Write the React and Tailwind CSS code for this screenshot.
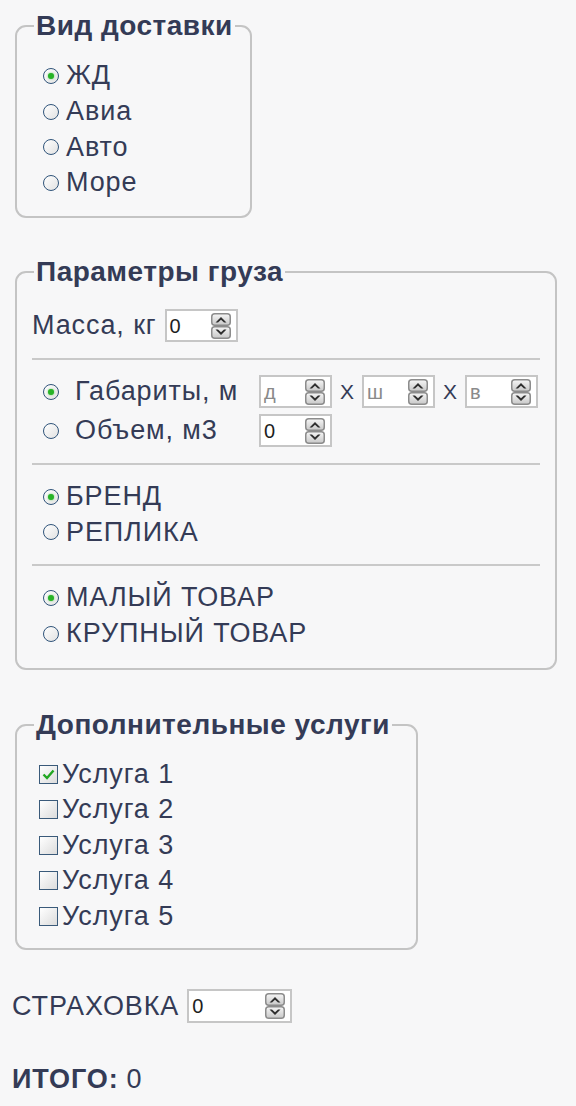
import { useState } from 'react';

// Calculator form: delivery type, cargo params, extra services, insurance, total

function Spinner() {
  return (
    <svg width="20" height="26" viewBox="0 0 20 26" className="shrink-0">
      <defs>
        <linearGradient id="spin-g" x1="0" y1="0" x2="0" y2="1">
          <stop offset="0" stopColor="#f6f6f6" />
          <stop offset="1" stopColor="#c8c8c8" />
        </linearGradient>
      </defs>
      <rect x="0.75" y="0.75" width="18.5" height="11.5" rx="3" fill="url(#spin-g)" stroke="#8c8c8c" strokeWidth="1.5" />
      <rect x="0.75" y="13.75" width="18.5" height="11.5" rx="3" fill="url(#spin-g)" stroke="#8c8c8c" strokeWidth="1.5" />
      <path d="M4.5 9.5 L10 4 L15.5 9.5 L13 9.5 L10 6.8 L7 9.5Z" fill="#2e2e2e" />
      <path d="M4.5 16.5 L10 22 L15.5 16.5 L13 16.5 L10 19.2 L7 16.5Z" fill="#2e2e2e" />
    </svg>
  );
}

function NumBox({ value, placeholder, wide }) {
  return (
    <div
      className={
        (wide ? 'w-[105px] h-[34px]' : 'w-[73px] h-[33px]') +
        ' flex items-center justify-between border-2 border-[#c6c6c6] bg-white pl-[3px] pr-[5px] shrink-0 tracking-normal'
      }
    >
      {value !== undefined ? (
        <span className="text-[20px] leading-none text-[#1e1e1e]">{value}</span>
      ) : (
        <span className="text-[20px] leading-none text-[#8a8a8a]">{placeholder}</span>
      )}
      <Spinner />
    </div>
  );
}

function Radio({ checked, onClick }) {
  return (
    <span
      onClick={onClick}
      className="ml-[11px] w-[16px] h-[16px] shrink-0 rounded-full border-[1.5px] border-[#30547a] bg-linear-to-br from-white to-[#e2e2e2] flex items-center justify-center cursor-pointer"
    >
      {checked && <span className="w-[6px] h-[6px] rounded-full bg-[#27b327] shadow-[0_0_2px_#6c6]" />}
    </span>
  );
}

function Check({ checked, onClick }) {
  return (
    <span
      onClick={onClick}
      className="ml-[7px] w-[19px] h-[19px] shrink-0 border-[1.5px] border-[#3a5a7a] bg-linear-to-br from-white to-[#dcdcdc] flex items-center justify-center cursor-pointer"
    >
      {checked && (
        <svg width="13" height="11" viewBox="0 0 13 11">
          <path d="M1.5 5.5 L5 9 L11.5 1.5" fill="none" stroke="#22a722" strokeWidth="2.4" />
        </svg>
      )}
    </span>
  );
}

function Divider() {
  return <div className="my-[14px] border-t-2 border-[#c9c9c9]" />;
}

function RadioRow({ label, checked, onClick }) {
  return (
    <div className="h-[35.7px] flex items-center gap-[7px]">
      <Radio checked={checked} onClick={onClick} />
      <span className="leading-none whitespace-nowrap">{label}</span>
    </div>
  );
}

export default function App() {
  const [delivery, setDelivery] = useState('ЖД');
  const [sizeMode, setSizeMode] = useState('dims');
  const [brand, setBrand]       = useState('БРЕНД');
  const [size, setSize]         = useState('МАЛЫЙ ТОВАР');
  const [services, setServices] = useState([true, false, false, false, false]);

  const legend = 'ml-[2px] px-[2px] text-[28px] font-bold leading-[30px] tracking-[0.5px] whitespace-nowrap';
  const fieldset = 'ml-[3px] rounded-[11px] border-2 border-[#c4c4c4] px-[15px]';

  return (
    <div className="min-h-[1106px] bg-[#f7f7f8] pl-[12px] pt-[11px] font-['Liberation_Sans',Arial,sans-serif] text-[27px] tracking-[0.9px] text-[#343b56]">
      {/* Вид доставки */}
      <fieldset className={fieldset + ' w-[237px] pb-[15px]'}>
        <legend className={legend}>Вид доставки</legend>
        <div className="pt-[17px]">
          {['ЖД', 'Авиа', 'Авто', 'Море'].map((d) => (
            <RadioRow key={d} label={d} checked={delivery === d} onClick={() => setDelivery(d)} />
          ))}
        </div>
      </fieldset>

      {/* Параметры груза */}
      <fieldset className={fieldset + ' w-[542px] mt-[39px] pb-[16px]'}>
        <legend className={legend}>Параметры груза</legend>
        <div className="pt-[21px]">
          <div className="h-[36px] flex items-center gap-[8px]">
            <span className="leading-none whitespace-nowrap">Масса, кг</span>
            <NumBox value="0" />
          </div>

          <Divider />

          <div className="h-[36px] flex items-center">
            <div className="w-[227px] flex items-center gap-[16px]">
              <Radio checked={sizeMode === 'dims'} onClick={() => setSizeMode('dims')} />
              <span className="leading-none whitespace-nowrap">Габариты, м</span>
            </div>
            <NumBox placeholder="д" />
            <span className="mx-[8px] text-[21px] tracking-normal leading-none">Х</span>
            <NumBox placeholder="ш" />
            <span className="mx-[8px] text-[21px] tracking-normal leading-none">Х</span>
            <NumBox placeholder="в" />
          </div>
          <div className="mt-[3px] h-[36px] flex items-center">
            <div className="w-[227px] flex items-center gap-[16px]">
              <Radio checked={sizeMode === 'volume'} onClick={() => setSizeMode('volume')} />
              <span className="leading-none whitespace-nowrap">Объем, м3</span>
            </div>
            <NumBox value="0" />
          </div>

          <Divider />

          {['БРЕНД', 'РЕПЛИКА'].map((b) => (
            <RadioRow key={b} label={b} checked={brand === b} onClick={() => setBrand(b)} />
          ))}

          <Divider />

          {['МАЛЫЙ ТОВАР', 'КРУПНЫЙ ТОВАР'].map((s) => (
            <RadioRow key={s} label={s} checked={size === s} onClick={() => setSize(s)} />
          ))}
        </div>
      </fieldset>

      {/* Дополнительные услуги */}
      <fieldset className={fieldset + ' w-[403px] mt-[40px] pb-[14px]'}>
        <legend className={legend}>Дополнительные услуги</legend>
        <div className="pt-[17px]">
          {services.map((on, i) => (
            <div key={i} className="h-[35.5px] flex items-center gap-[4px]">
              <Check
                checked={on}
                onClick={() => setServices((prev) => prev.map((v, j) => (j === i ? !v : v)))}
              />
              <span className="leading-none whitespace-nowrap">Услуга {i + 1}</span>
            </div>
          ))}
        </div>
      </fieldset>

      <div className="mt-[38px] h-[36px] flex items-center gap-[8px]">
        <span className="leading-none">СТРАХОВКА</span>
        <NumBox value="0" wide />
      </div>

      <div className="mt-[37px] h-[36px] flex items-center leading-none">
        <span className="font-bold">ИТОГО:</span>
        <span className="ml-[8px]">0</span>
      </div>
    </div>
  );
}
